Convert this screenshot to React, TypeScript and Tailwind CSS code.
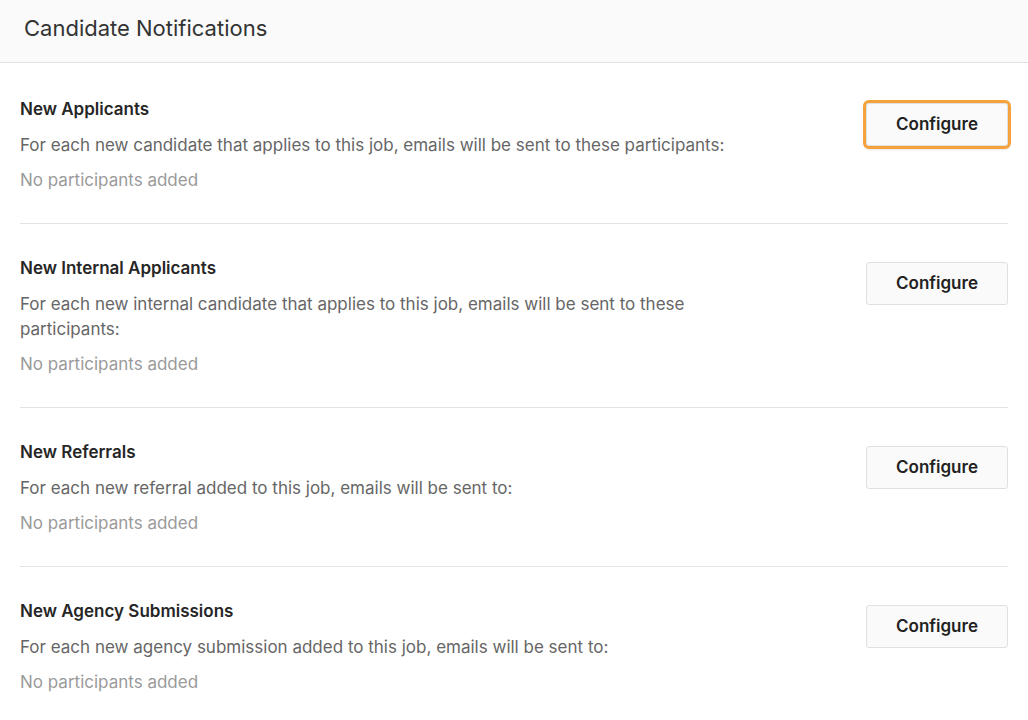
const sections = [
  {
    title: 'New Applicants',
    description: 'For each new candidate that applies to this job, emails will be sent to these participants:',
    focused: true,
  },
  {
    title: 'New Internal Applicants',
    description: 'For each new internal candidate that applies to this job, emails will be sent to these participants:',
    focused: false,
  },
  {
    title: 'New Referrals',
    description: 'For each new referral added to this job, emails will be sent to:',
    focused: false,
  },
  {
    title: 'New Agency Submissions',
    description: 'For each new agency submission added to this job, emails will be sent to:',
    focused: false,
  },
];

export default function App() {
  return (
    <div className="min-h-screen bg-white font-['Inter',sans-serif] text-[#222]">
      <div className="h-[63px] flex items-center px-6 pb-[6px] bg-[#fafafa] border-b border-[#e1e1e1]">
        <h1 className="text-[22px] text-[#333] font-normal">Candidate Notifications</h1>
      </div>

      <div className="px-5">
        {sections.map((section, i) => (
          <div
            key={section.title}
            className={`flex justify-between items-start pb-[30px] ${i === 0 ? 'pt-[34px]' : 'pt-8'} ${i < sections.length - 1 ? 'border-b border-[#e3e3e3]' : ''}`}
          >
            <div className="max-w-[720px]">
              <h2 className="text-[17px] leading-6 font-semibold text-[#262626]">{section.title}</h2>
              <p className="mt-3 text-[17px] leading-[25px] text-[#666]">{section.description}</p>
              <p className="mt-[10px] text-[17px] leading-[25px] text-[#9a9a9a]">No participants added</p>
            </div>
            <button
              className={`mt-[6px] w-[142px] h-[43px] rounded-[3px] border border-[#e0e0e0] bg-[#fafafa] text-[17px] font-semibold text-[#222] ${section.focused ? 'outline-[3px] outline-solid outline-[#f5a23c] shadow-[0_2px_4px_rgba(0,0,0,0.25)]' : ''}`}
            >
              Configure
            </button>
          </div>
        ))}
      </div>
    </div>
  );
}
